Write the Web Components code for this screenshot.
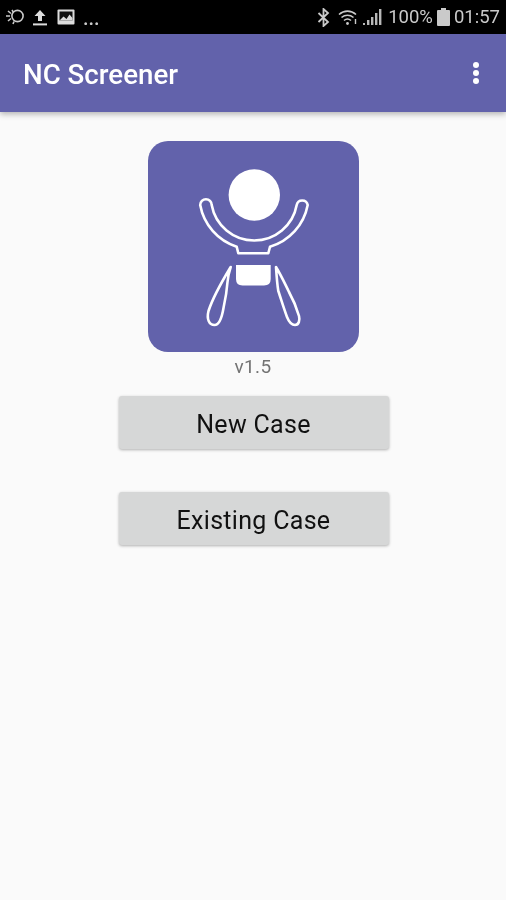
<!DOCTYPE html>
<html>
<head>
<meta charset="utf-8">
<title>NC Screener</title>
<style>
  html, body { margin: 0; height: 100%; background: #fafafa; }
  body { font-family: Roboto, "Liberation Sans", sans-serif; }
</style>
</head>
<body>
<app-screen>
  <status-bar></status-bar>
  <app-bar>NC Screener</app-bar>
  <app-logo></app-logo>
  <version-label>v1.5</version-label>
  <action-button>New Case</action-button>
  <action-button>Existing Case</action-button>
</app-screen>

<script>
class AppScreen extends HTMLElement {
  constructor() {
    super();
    const shadow = this.attachShadow({ mode: 'open' });
    shadow.innerHTML = `<style>
      :host {
        display: flex;
        flex-direction: column;
        align-items: center;
        width: 100%;
        height: 900px;
        background: #fafafa;
        overflow: hidden;
        filter: blur(0.5px);
      }
    </style><slot></slot>`;
  }
}

class StatusBar extends HTMLElement {
  constructor() {
    super();
    const shadow = this.attachShadow({ mode: 'open' });
    shadow.innerHTML = `<style>
      :host {
        display: flex;
        align-items: center;
        justify-content: space-between;
        align-self: stretch;
        height: 34px;
        padding: 0 6px 0 5px;
        background: #000;
        color: #cacaca;
        font-size: 18.5px;
        line-height: 34px;
      }
      .side { display: flex; align-items: center; }
      svg { display: block; flex: none; }
      .dots { margin-left: 8px; font-size: 20px; line-height: 20px; padding-top: 2px; font-weight: 500; }
    </style>
    <div class="side">
      <svg width="20" height="16" viewBox="0 0 20 16" fill="none" stroke="#cacaca" stroke-width="1.6">
        <circle cx="12.5" cy="7" r="5.6"/>
        <path d="M1 7h4M3 2l3 2.5M3 12l3-2.5M7 1l1.5 2.5M8 15l1-2.5"/>
      </svg>
      <svg style="margin-left:7px" width="16" height="17" viewBox="0 0 16 17" fill="#dcdcdc">
        <path d="M8 1l5.5 6H10v5H6V7H2.5z"/><rect x="1" y="14.4" width="14" height="2"/>
      </svg>
      <svg style="margin-left:9px" width="18" height="16" viewBox="0 0 18 16">
        <rect x="0.5" y="0.5" width="17" height="15" rx="1" fill="#dcdcdc"/>
        <rect x="2.5" y="2.5" width="13" height="9" fill="#111"/>
        <path d="M2.5 11.5l4-4 3 2.5 3-4.5 3 3.5v2.5z" fill="#dcdcdc"/>
      </svg>
      <span class="dots">...</span>
    </div>
    <div class="side">
      <svg width="13" height="19" viewBox="0 0 13 19" fill="none" stroke="#cacaca" stroke-width="1.8">
        <path d="M1.5 5l9.5 9-4.5 4V1l4.5 4-9.5 9"/>
      </svg>
      <svg style="margin-left:8px" width="21" height="17" viewBox="0 0 21 17" fill="none" stroke="#cacaca" stroke-width="1.6">
        <path d="M1 5.5C6 1 13 1 18 5.5M3.5 8.5c3.5-3 8.5-3 12 0M6 11.5c2-1.7 5-1.7 7 0"/>
        <circle cx="9.5" cy="14.5" r="1.4" fill="#cacaca" stroke="none"/>
        <path d="M17.5 10v5" stroke-width="1.4"/>
      </svg>
      <svg style="margin-left:4px" width="19" height="18" viewBox="0 0 19 18" fill="#b8b8b8">
        <rect x="0" y="15" width="2" height="2"/>
        <rect x="4" y="12" width="2.4" height="5"/>
        <rect x="8" y="9" width="2.4" height="8"/>
        <rect x="12" y="5" width="2.4" height="12"/>
        <rect x="16" y="1" width="2.4" height="16"/>
      </svg>
      <span style="margin-left:6px">100%</span>
      <svg style="margin-left:4px" width="13" height="18" viewBox="0 0 13 18" fill="#cacaca">
        <path d="M4 0h5v2h3a1 1 0 0 1 1 1v14a1 1 0 0 1-1 1H1a1 1 0 0 1-1-1V3a1 1 0 0 1 1-1h3z"/>
      </svg>
      <span style="margin-left:4px">01:57</span>
    </div>`;
  }
}

class AppBar extends HTMLElement {
  constructor() {
    super();
    const shadow = this.attachShadow({ mode: 'open' });
    shadow.innerHTML = `<style>
      :host {
        display: flex;
        align-items: center;
        justify-content: space-between;
        align-self: stretch;
        height: 78px;
        box-sizing: border-box;
        padding: 2px 27px 0 23px;
        background: #6262ab;
        color: #fff;
        font-size: 27.7px;
        font-weight: 500;
        box-shadow: 0 2px 6px rgba(0, 0, 0, 0.3);
        position: relative;
      }
      .more { display: flex; flex-direction: column; gap: 2.4px; margin-top: -2px; }
      .more i { display: block; width: 6px; height: 6px; border-radius: 50%; background: #fff; }
    </style>
    <slot></slot>
    <div class="more"><i></i><i></i><i></i></div>`;
  }
}

class AppLogo extends HTMLElement {
  constructor() {
    super();
    const shadow = this.attachShadow({ mode: 'open' });
    shadow.innerHTML = `<style>
      :host {
        display: block;
        width: 211px;
        height: 211px;
        margin-top: 29px;
        background: #6262ab;
        border-radius: 20px;
      }
      svg { display: block; }
    </style>
    <svg width="211" height="211" viewBox="0 0 211 211">
      <circle cx="106.3" cy="54" r="25.7" fill="#fff"/>
      <path d="M88 124H122.7V138Q122.7 144.5 116 144.5H94.5Q88 144.5 88 138Z" fill="#fff"/>
      <g fill="none" stroke="#fff" stroke-width="2.6" stroke-linejoin="round">
        <path d="M52.2 64A5.7 5.7 0 0 1 63.7 64A43.2 43.2 0 0 0 148.7 64A5.6 5.6 0 0 1 159.7 64A54 54 0 0 1 122 105.7L120.3 112.3H90.3L88.7 105.7A54 54 0 0 1 52.2 64Z"/>
        <path d="M82.7 126C73 142 65 156 60.5 170 58.5 178 61 184 66.5 184 71 184 74 176 75.5 167 77.5 158 79 148 79.5 141 80 135 81 131 82.7 126Z"/>
        <path d="M128 126C128.5 134 129 142 130.3 150 133 158 136 168 139 176 141 181 144 184 147 184 151 184 152 179 151 175 149 168 146 160 141 151 137 143 133 134 128 126Z"/>
      </g>
    </svg>`;
  }
}

class VersionLabel extends HTMLElement {
  constructor() {
    super();
    const shadow = this.attachShadow({ mode: 'open' });
    shadow.innerHTML = `<style>
      :host {
        display: block;
        margin-top: 4px;
        height: 22px;
        line-height: 22px;
        font-size: 19px;
        color: #737373;
        letter-spacing: 0.3px;
      }
    </style><slot></slot>`;
  }
}

class ActionButton extends HTMLElement {
  constructor() {
    super();
    const shadow = this.attachShadow({ mode: 'open' });
    shadow.innerHTML = `<style>
      :host {
        display: flex;
        align-items: center;
        justify-content: center;
        box-sizing: border-box;
        width: 270px;
        height: 53px;
        padding-top: 3px;
        margin: 18px 0 25px 1px;
        background: #d6d7d7;
        border-radius: 3px;
        color: #111;
        font-size: 25px;
        letter-spacing: 0.3px;
        box-shadow: 0 1px 3px rgba(0, 0, 0, 0.3);
      }
    </style><slot></slot>`;
  }
}

customElements.define('app-screen', AppScreen);
customElements.define('status-bar', StatusBar);
customElements.define('app-bar', AppBar);
customElements.define('app-logo', AppLogo);
customElements.define('version-label', VersionLabel);
customElements.define('action-button', ActionButton);
</script>
</body>
</html>
